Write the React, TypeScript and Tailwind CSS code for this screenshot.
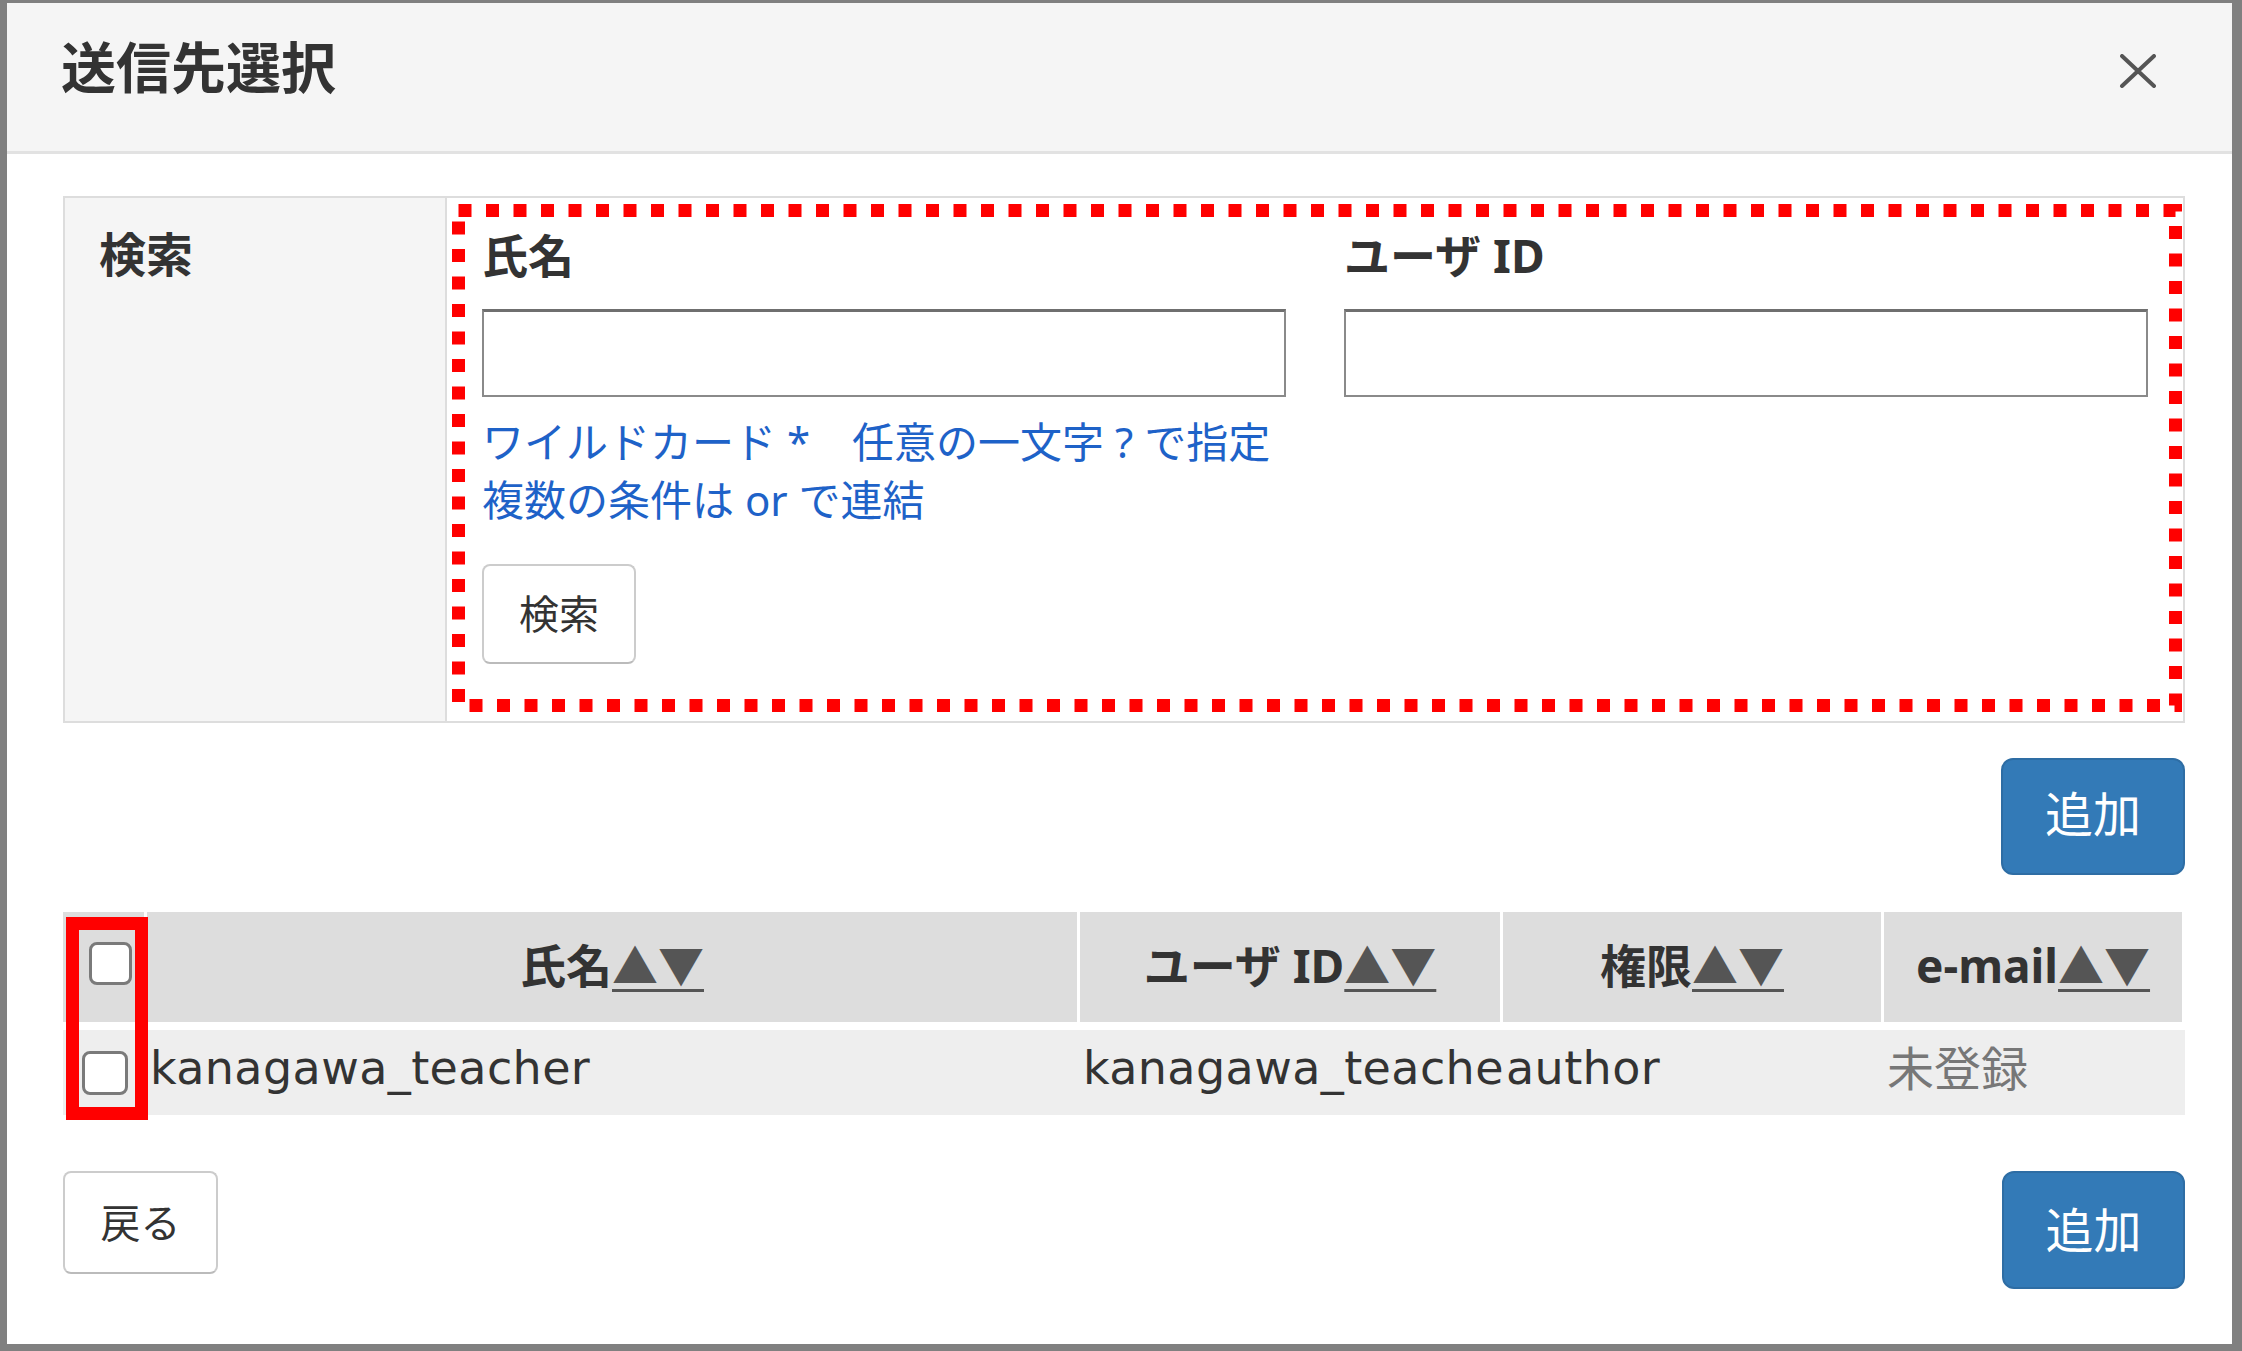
import React from "react";

function Box({ className = "" }: { className?: string }) {
  return (
    <div
      className={
        "rounded-[8px] border-[3px] border-[#7a7a7a] bg-white " + className
      }
    />
  );
}

function SortHead({ label, className = "" }: { label: string; className?: string }) {
  return (
    <div
      className={
        "flex h-full items-center justify-center border-r-[3px] border-white text-[46px] font-bold text-[#333] " +
        className
      }
    >
      <span>{label}</span>
      <span className="text-[#555] underline decoration-[3px] underline-offset-[6px]">
        ▲▼
      </span>
    </div>
  );
}

export default function App() {
  return (
    <div className="flex h-[1351px] w-[2242px] flex-col border-b-[7px] border-l-[7px] border-r-[10px] border-t-[3px] border-[#808080] bg-white font-['Noto_Sans','Noto_Sans_CJK_JP',sans-serif] text-[#333]">
      {/* header */}
      <div className="flex h-[151px] shrink-0 items-center justify-between border-b-[3px] border-[#e2e2e2] bg-[#f5f5f5] pl-[54px] pr-[75px]">
        <h1 className="mb-[22px] text-[55px] font-bold leading-none text-[#333]">送信先選択</h1>
        <svg width="38" height="34" viewBox="0 0 38 34" className="mb-[12px]">
          <path d="M3 2 L35 32 M35 2 L3 32" stroke="#555" strokeWidth="4" strokeLinecap="round" />
        </svg>
      </div>

      {/* body */}
      <div className="flex flex-1 flex-col pl-[56px] pr-[47px] pt-[42px]">
        {/* search */}
        <div className="flex h-[527px] border-2 border-[#ddd]">
          <div className="w-[382px] border-r-2 border-[#ddd] bg-[#f5f5f5] pl-[34px] pt-[28px]">
            <div className="text-[47px] font-bold leading-[1.2]">検索</div>
          </div>
          <div className="relative flex-1">
            <svg
              width="1730"
              height="508"
              className="pointer-events-none absolute left-[5px] top-[6px]"
            >
              <rect
                x="6.5"
                y="6.5"
                width="1717"
                height="495"
                fill="none"
                stroke="#ff0000"
                strokeWidth="13"
                strokeDasharray="13 14.5"
              />
            </svg>
            <div className="grid grid-cols-2 gap-x-[58px] pl-[35px] pr-[35px] pt-[30px]">
              <div>
                <div className="text-[46px] font-bold leading-[1.2]">氏名</div>
                <input className="mt-[26px] h-[88px] w-full border-2 border-t-[3px] border-[#8a8a8a] border-t-[#6f6f6f] bg-white outline-none" />
                <div className="mt-[16px] text-[42px] leading-[58px] text-[#1e62c8]">
                  <div>ワイルドカード *　任意の一文字 ? で指定</div>
                  <div>複数の条件は or で連結</div>
                </div>
                <button className="mt-[35px] h-[100px] w-[154px] rounded-[8px] border-2 border-[#ccc] border-b-[#bbb] bg-white text-[40px] text-[#333]">
                  検索
                </button>
              </div>
              <div>
                <div className="text-[46px] font-bold leading-[1.2]">ユーザ ID</div>
                <input className="mt-[26px] h-[88px] w-full border-2 border-t-[3px] border-[#8a8a8a] border-t-[#6f6f6f] bg-white outline-none" />
              </div>
            </div>
          </div>
        </div>

        <button className="mt-[35px] h-[117px] w-[184px] self-end rounded-[12px] border-2 border-[#2e6da4] bg-[#337ab7] pb-[6px] text-[48px] text-white">
          追加
        </button>

        {/* results */}
        <div className="relative mt-[37px]">
          <div className="flex h-[110px] bg-[#ddd]">
            <div className="flex w-[84px] items-start border-r-[3px] border-white pl-[26px] pt-[30px]">
              <Box className="h-[43px] w-[43px]" />
            </div>
            <SortHead label="氏名" className="w-[933px] pb-[4px]" />
            <SortHead label="ユーザ ID" className="w-[423px] pb-[4px]" />
            <SortHead label="権限" className="w-[381px] pb-[4px]" />
            <SortHead label="e-mail" className="flex-1 border-r-0 pb-[4px]" />
          </div>
          <div className="mt-[8px] flex h-[85px] items-center bg-[#eee] pb-[8px] text-[46px] text-[#333]">
            <div className="w-[87px] pl-[19px] pt-[8px]">
              <Box className="h-[44px] w-[46px]" />
            </div>
            <div className="w-[933px] whitespace-nowrap font-['DejaVu_Sans','Noto_Sans_CJK_JP',sans-serif] tracking-[0.4px]">
              kanagawa_teacher
            </div>
            <div className="w-[423px] whitespace-nowrap font-['DejaVu_Sans','Noto_Sans_CJK_JP',sans-serif] tracking-[0.4px]">
              kanagawa_teache
            </div>
            <div className="w-[381px] whitespace-nowrap font-['DejaVu_Sans','Noto_Sans_CJK_JP',sans-serif] tracking-[0.4px]">
              author
            </div>
            <div className="flex-1 whitespace-nowrap text-[47px] text-[#777]">未登録</div>
          </div>
          <div className="pointer-events-none absolute left-[3px] top-[5px] h-[203px] w-[82px] border-[13px] border-[#ff0000]" />
        </div>

        <div className="mt-[56px] flex items-start justify-between">
          <button className="h-[103px] w-[155px] rounded-[8px] border-2 border-[#ccc] border-b-[#bbb] bg-white text-[40px] text-[#333]">
            戻る
          </button>
          <button className="h-[118px] w-[183px] rounded-[12px] border-2 border-[#2e6da4] bg-[#337ab7] text-[48px] text-white">
            追加
          </button>
        </div>
      </div>
    </div>
  );
}
